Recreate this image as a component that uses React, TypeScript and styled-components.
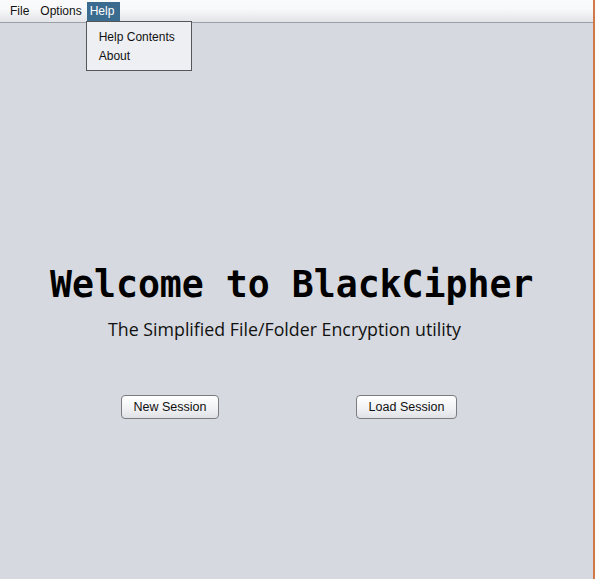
import React from "react";
import styled, { createGlobalStyle } from "styled-components";

const Global = createGlobalStyle`
  html, body { margin: 0; padding: 0; background: #d6d9e0; }
  #root { width: 595px; height: 579px; }
`;

const Window = styled.div`
  position: relative;
  width: 595px;
  height: 579px;
  box-sizing: border-box;
  background: #d6d9e0;
  border-right: 2px solid #d2794a;
  display: flex;
  flex-direction: column;
  font-family: "Liberation Sans", Arial, sans-serif;
`;

const MenuBar = styled.div`
  height: 23px;
  box-sizing: border-box;
  background: linear-gradient(#fbfbfc 0%, #f8f9fa 40%, #e2e4e8 100%);
  border-bottom: 1px solid #9a9ea6;
  display: flex;
  align-items: flex-start;
  padding: 2px 0 0 3px;
`;

const MenuItem = styled.div<{ $active?: boolean }>`
  position: relative;
  height: 19px;
  line-height: 19px;
  padding: 0 ${(p) => (p.$active ? "6px" : "4px")} 0 ${(p) => (p.$active ? "3px" : "7px")};
  font-size: 12px;
  color: ${(p) => (p.$active ? "#ffffff" : "#111111")};
  background: ${(p) => (p.$active ? "#3b6b8e" : "transparent")};
  margin-left: ${(p) => (p.$active ? "1px" : "0")};
`;

const Dropdown = styled.div`
  position: absolute;
  top: 19px;
  left: -1px;
  width: 106px;
  height: 50px;
  box-sizing: border-box;
  background: #eeeff3;
  border: 1px solid #555659;
  padding: 6px 0 0 12px;
  display: flex;
  flex-direction: column;
  z-index: 10;
`;

const DropItem = styled.div`
  font-size: 12px;
  line-height: 19px;
  color: #111111;
  white-space: nowrap;
`;

const Main = styled.div`
  flex: 1;
  display: flex;
  flex-direction: column;
  padding-top: 240px;
`;

const Title = styled.h1`
  margin: 0;
  padding-left: 50px;
  font-family: "DejaVu Sans Mono", "Liberation Mono", monospace;
  font-weight: bold;
  font-size: 36.5px;
  line-height: 44px;
  color: #000;
  white-space: nowrap;
`;

const Subtitle = styled.div`
  margin-top: 11px;
  padding-left: 108px;
  font-family: "Open Sans", "Noto Sans", sans-serif;
  font-size: 17.8px;
  line-height: 22px;
  color: #111;
  white-space: nowrap;
`;

const ButtonRow = styled.div`
  display: flex;
  gap: 137px;
  padding-left: 121px;
  margin-top: 55px;
`;

const Button = styled.button<{ $w: number }>`
  width: ${(p) => p.$w}px;
  height: 24px;
  box-sizing: border-box;
  border: 1px solid #7a7c80;
  border-radius: 4px;
  background: linear-gradient(#ffffff 0%, #f3f4f6 50%, #dfe1e5 100%);
  font-family: "Liberation Sans", Arial, sans-serif;
  font-size: 12.5px;
  color: #111;
  padding: 0;
  cursor: pointer;
`;

export default function App() {
  return (
    <>
      <Global />
      <Window>
        <MenuBar>
          <MenuItem>File</MenuItem>
          <MenuItem>Options</MenuItem>
          <MenuItem $active>
            Help
            <Dropdown>
              <DropItem>Help Contents</DropItem>
              <DropItem>About</DropItem>
            </Dropdown>
          </MenuItem>
        </MenuBar>
        <Main>
          <Title>Welcome to BlackCipher</Title>
          <Subtitle>The Simplified File/Folder Encryption utility</Subtitle>
          <ButtonRow>
            <Button $w={98}>New Session</Button>
            <Button $w={101}>Load Session</Button>
          </ButtonRow>
        </Main>
      </Window>
    </>
  );
}
